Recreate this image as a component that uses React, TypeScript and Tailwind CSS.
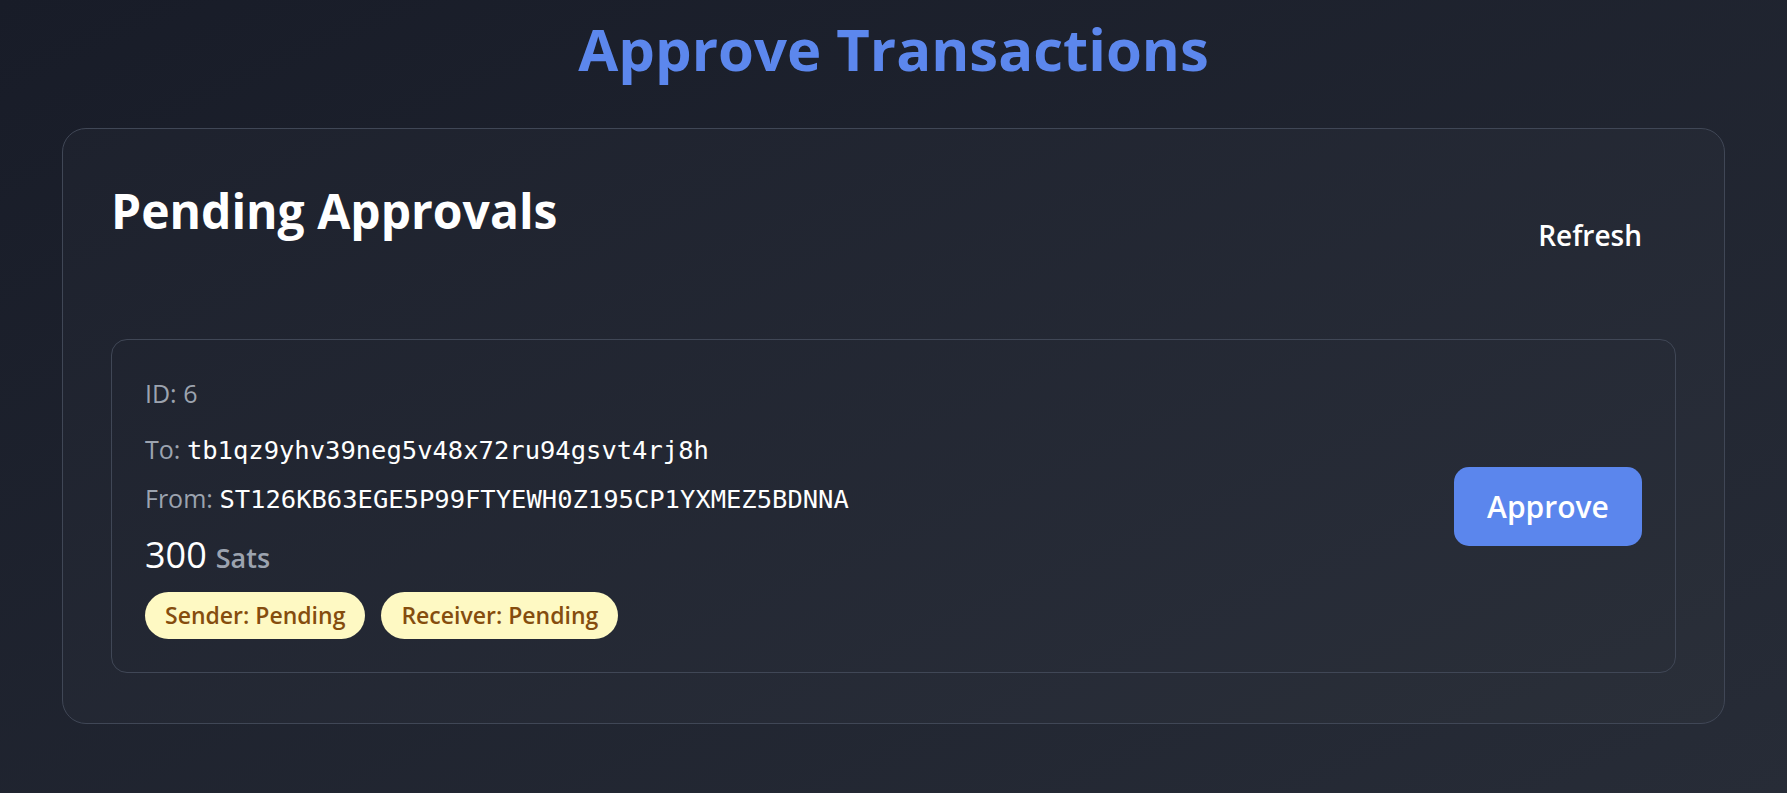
const pending = [
  {
    id: 6,
    to: "tb1qz9yhv39neg5v48x72ru94gsvt4rj8h",
    from: "ST126KB63EGE5P99FTYEWH0Z195CP1YXMEZ5BDNNA",
    amount: 300,
    sender: "Pending",
    receiver: "Pending",
  },
];

const mono = "font-['DejaVu_Sans_Mono','Liberation_Mono',monospace]";

export default function App() {
  return (
    <main className="min-h-screen bg-linear-to-br from-[#181c28] to-[#272c37] px-[62px] pt-5 pb-[70px] font-['Open_Sans','Noto_Sans',sans-serif] text-white">
      <h1 className="text-center text-[58px] leading-none font-bold text-[#5c87ed]">
        Approve Transactions
      </h1>

      <section className="mt-[50px] rounded-[24px] border border-[#404756] bg-white/[0.02] px-12 pt-12 pb-[50px]">
        <div className="flex items-start justify-between">
          <h2 className="text-[48px] leading-[67px] font-bold">Pending Approvals</h2>
          <button className="mt-[37px] px-[34px] text-[28px] leading-[42px] font-semibold">Refresh</button>
        </div>

        {pending.map((tx) => (
          <div
            key={tx.id}
            className="mt-[83px] flex items-center justify-between rounded-[16px] border border-[#404756] p-[33px]"
          >
            <div className="flex flex-col">
              <div className="text-[25px] leading-[40px] text-[#9ca3af]">ID: {tx.id}</div>
              <div className="mt-[18px] text-[25px] leading-[36px] text-[#9ca3af]">
                To: <span className={`${mono} text-[25.5px] text-white`}>{tx.to}</span>
              </div>
              <div className="mt-[12px] text-[25px] leading-[36px] text-[#9ca3af]">
                From: <span className={`${mono} text-[25.5px] text-white`}>{tx.from}</span>
              </div>
              <div className="mt-[16px] flex items-baseline gap-[9px] leading-[44px]">
                <span className="text-[36px] font-medium">{tx.amount}</span>
                <span className="text-[27px] font-semibold text-[#9ca3af]">Sats</span>
              </div>
              <div className="mt-[12px] flex gap-4">
                <span className="flex h-[47px] items-center rounded-full bg-[#fef9c3] px-5 text-[23px] font-semibold text-[#854d0e]">
                  Sender: {tx.sender}
                </span>
                <span className="flex h-[47px] items-center rounded-full bg-[#fef9c3] px-5 text-[23px] font-semibold text-[#854d0e]">
                  Receiver: {tx.receiver}
                </span>
              </div>
            </div>

            <button className="flex h-[79px] w-[188px] items-center justify-center rounded-[15px] bg-[#5b86ed] text-[30px] font-semibold">
              Approve
            </button>
          </div>
        ))}
      </section>
    </main>
  );
}
